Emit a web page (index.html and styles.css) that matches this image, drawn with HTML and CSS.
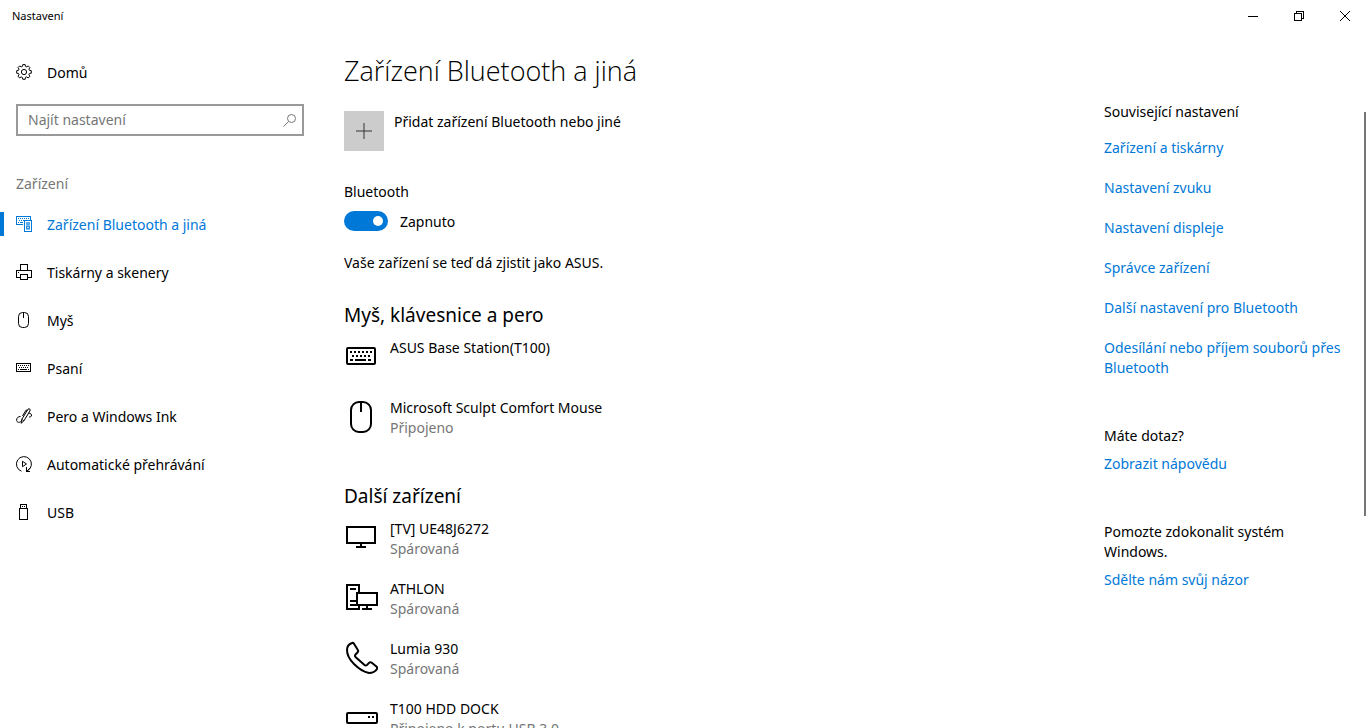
FILE: index.html
```
<!DOCTYPE html>
<html lang="cs">
<head>
  <meta charset="UTF-8">
  <meta name="viewport" content="width=device-width, initial-scale=1">
  <title>Nastavení</title>
  <link rel="stylesheet" href="styles.css">
</head>
<body>

<header class="titlebar">
  <span class="titlebar-name">Nastavení</span>
  <div class="window-buttons">
    <button type="button" aria-label="Minimalizovat">
      <svg width="10" height="10" viewBox="0 0 10 10"><path class="crisp" d="M0 5.5h10"/></svg>
    </button>
    <button type="button" aria-label="Obnovit">
      <svg width="10" height="10" viewBox="0 0 10 10"><path class="crisp" d="M.5 2.5h7v7h-7zM2.5 2.5v-2h7v7h-2"/></svg>
    </button>
    <button type="button" aria-label="Zavřít">
      <svg width="10" height="10" viewBox="0 0 10 10"><path d="M0 0l10 10M10 0L0 10"/></svg>
    </button>
  </div>
</header>

<div class="layout">
  <nav class="sidebar">
    <a class="nav-link" href="#domu">
      <svg width="16" height="16" viewBox="0 0 16 16"><path d="M6.8.6h2.4l.3 1.8 1.2.5 1.5-1 1.7 1.7-1 1.5.5 1.2 1.9.4v2.5l-1.9.3-.5 1.2 1 1.5-1.7 1.8-1.5-1.1-1.2.5-.3 1.9H6.8l-.4-1.9-1.2-.5-1.5 1.1L2 12.2l1-1.5-.5-1.2-1.8-.3V6.7l1.8-.4.5-1.2-1-1.5 1.7-1.7 1.5 1 1.2-.5z"/><circle cx="8" cy="8" r="2.6"/></svg>
      <span>Domů</span>
    </a>
    <div class="search">
      <input type="text" placeholder="Najít nastavení" aria-label="Najít nastavení">
      <svg width="13" height="13" viewBox="0 0 13 13"><circle cx="8.500" cy="4.500" r="4"/><path d="M5.500 7.500L.4 12.600"/></svg>
    </div>
    <h2 class="sidebar-title">Zařízení</h2>
    <ul class="nav-list">
      <li><a class="nav-link active" href="#bluetooth">
        <svg width="16" height="16" viewBox="0 0 16 16"><g class="crisp"><path d="M7 8.500H.5v-8h14v3"/><path stroke-dasharray="1 1" d="M2 2.500h11M3 4.500h5"/><path d="M2 6.500h1M4 6.500h3M8.500 4.500h7v11h-7z"/></g><circle cx="12" cy="7.500" r="1"/><circle cx="12" cy="11.500" r="1.500"/><path stroke-opacity=".5" d="M10.500 6v8M13.500 6v8M12 9v5"/></svg>
        <span>Zařízení Bluetooth a jiná</span>
      </a></li>
      <li><a class="nav-link" href="#tiskarny">
        <svg width="16" height="16" viewBox="0 0 16 16"><path class="crisp" d="M4.500 6V.500h7V6M4.500 13.500h-4v-7h15v7h-4M4.500 10.500h7v5h-7zM2 8.500h1"/></svg>
        <span>Tiskárny a skenery</span>
      </a></li>
      <li><a class="nav-link" href="#mys">
        <svg width="16" height="16" viewBox="0 0 16 16"><rect x="2.500" y=".5" width="10" height="15" rx="4"/><path class="crisp" d="M7.500 0v6"/></svg>
        <span>Myš</span>
      </a></li>
      <li><a class="nav-link" href="#psani">
        <svg width="16" height="16" viewBox="0 0 16 16"><g class="crisp"><path d="M.5 3.500h14v8H.5z"/><path stroke-dasharray="1 1" d="M2 5.500h11M3 7.500h10"/><path d="M2 9.500h1M4 9.500h7M12 9.500h1"/></g></svg>
        <span>Psaní</span>
      </a></li>
      <li><a class="nav-link" href="#pero">
        <svg width="16" height="16" viewBox="0 0 16 16"><path d="M5 15.300l.8-4L12 1.200q1-1 1.800-.2t.1 2L7.800 13zM5.800 11.300l2 1.500M6.500 8l3.500-5.800 1.500-.2M4.600 8.500C2 8.300.5 10.300.6 12.300c.1 2 2.500 2.800 4 1.200M12.600 5c2 .1 3.500 1.500 2.800 3-.6 1.200-1.800 1.200-2.400.6"/></svg>
        <span>Pero a Windows Ink</span>
      </a></li>
      <li><a class="nav-link" href="#prehravani">
        <svg width="16" height="16" viewBox="0 0 16 16"><path d="M5.500 15.200A7.500 7.500 0 1 1 11.500 14.700M6.500 5.300v5.400l4-2.700z"/><path class="crisp" d="M10.500 11v4.500H14"/><path d="M10.500 15.500l3.500-3.500"/></svg>
        <span>Automatické přehrávání</span>
      </a></li>
      <li><a class="nav-link" href="#usb">
        <svg width="16" height="16" viewBox="0 0 16 16"><path class="crisp" d="M3.500 4.500h8v11h-8zM4.500 4.500v-4h6v4M6 2.500h1M8 2.500h1"/></svg>
        <span>USB</span>
      </a></li>
    </ul>
  </nav>

  <main class="content">
    <h1>Zařízení Bluetooth a jiná</h1>

    <button class="add-device" type="button">
      <span class="add-icon">
        <svg width="16" height="16" viewBox="0 0 16 16"><path d="M8 0v16M0 8h16"/></svg>
      </span>
      Přidat zařízení Bluetooth nebo jiné
    </button>

    <label class="field-label" for="bluetooth">Bluetooth</label>
    <div class="toggle-row">
      <input type="checkbox" role="switch" id="bluetooth" checked>
      <label for="bluetooth">Zapnuto</label>
    </div>
    <p class="status">Vaše zařízení se teď dá zjistit jako ASUS.</p>

    <h2>Myš, klávesnice a pero</h2>
    <ul class="devices">
      <li><button type="button">
        <svg width="34" height="36" viewBox="0 0 34 36"><rect x="3" y="10" width="28" height="16" rx="1"/><g class="crisp"><path stroke-dasharray="2 2" d="M6 14h22M8 18h18"/><path d="M6 22h3M11 22h11M24 22h3"/></g></svg>
        <span class="device-text">ASUS Base Station(T100)</span>
      </button></li>
      <li><button type="button">
        <svg width="34" height="36" viewBox="0 0 34 36"><rect x="7" y="4" width="20" height="30" rx="8"/><path class="crisp" d="M17 3v11"/></svg>
        <span class="device-text">Microsoft Sculpt Comfort Mouse<small>Připojeno</small></span>
      </button></li>
    </ul>

    <h2>Další zařízení</h2>
    <ul class="devices">
      <li><button type="button">
        <svg width="34" height="36" viewBox="0 0 34 36"><path class="crisp" d="M3 8h28v16H3zM17 24v4M12 28h10"/></svg>
        <span class="device-text">[TV] UE48J6272<small>Spárovaná</small></span>
      </button></li>
      <li><button type="button">
        <svg width="34" height="36" viewBox="0 0 34 36"><path class="crisp" d="M15 14V6H3v24h12V26M6 10h6M6 22h7M6 26h7M13 14h20v12H13zM23 26v4M18 30h10"/></svg>
        <span class="device-text">ATHLON<small>Spárovaná</small></span>
      </button></li>
      <li><button type="button">
        <svg width="34" height="36" viewBox="0 0 34 36"><path d="M8 4c-3 1-5 4-5 7 0 4 2 9 7 14s10 8 15 9c3 0 6-1 8-4 .4-1 0-2-.6-2.500l-4.600-3.700c-1-.8-2-.7-2.800.1L23 26c-1 .8-1.500.8-2.500 0L11.500 18c-.8-1-.8-1.500 0-2.500l2-2c.8-.8.900-1.800.2-2.700L10 4.800C9.500 4 8.800 3.700 8 4z"/></svg>
        <span class="device-text">Lumia 930<small>Spárovaná</small></span>
      </button></li>
      <li><button type="button">
        <svg width="34" height="36" viewBox="0 0 34 36"><rect x="3" y="14" width="30" height="10" rx="1"/><path class="crisp" d="M24 18h2M28 18h2"/></svg>
        <span class="device-text">T100 HDD DOCK<small>Připojeno k portu USB 3.0</small></span>
      </button></li>
    </ul>
  </main>

  <aside class="related">
    <section>
      <h3>Související nastavení</h3>
      <ul class="related-links">
        <li><a href="#zarizeni">Zařízení a tiskárny</a></li>
        <li><a href="#zvuk">Nastavení zvuku</a></li>
        <li><a href="#displej">Nastavení displeje</a></li>
        <li><a href="#spravce">Správce zařízení</a></li>
        <li><a href="#dalsi">Další nastavení pro Bluetooth</a></li>
        <li><a href="#soubory">Odesílání nebo příjem souborů přes Bluetooth</a></li>
      </ul>
    </section>
    <section>
      <h3>Máte dotaz?</h3>
      <a href="#napoveda">Zobrazit nápovědu</a>
    </section>
    <section>
      <h3>Pomozte zdokonalit systém Windows.</h3>
      <a href="#nazor">Sdělte nám svůj názor</a>
    </section>
  </aside>
</div>

<div class="scroll-thumb"></div>

</body>
</html>
```
FILE: styles.css
```
* {
  box-sizing: border-box;
}
body {
  margin: 0;
  height: 100vh;
  display: flex;
  flex-direction: column;
  overflow: hidden;
  background: #fff;
  color: #000;
  font-family: "Noto Sans", "Open Sans", sans-serif;
  font-size: 14px;
  line-height: 20px;
}
h1, h2, h3, p, ul {
  margin: 0;
  padding: 0;
  font-weight: 400;
}
ul {
  list-style: none;
}
button, input {
  font: inherit;
  color: inherit;
}
button {
  padding: 0;
  border: 0;
  background: none;
  text-align: left;
}
a {
  color: #0078d7;
  text-decoration: none;
}
svg {
  flex: none;
  fill: none;
  stroke: currentColor;
}
.crisp {
  shape-rendering: crispEdges;
}

/* title bar */
.titlebar {
  flex: none;
  height: 32px;
  display: flex;
  align-items: center;
  justify-content: space-between;
  padding-left: 12px;
  font-size: 11px;
}
.window-buttons {
  display: flex;
}
.window-buttons button {
  width: 46px;
  height: 32px;
  display: flex;
  align-items: center;
  justify-content: center;
}

.layout {
  flex: 1;
  min-height: 0;
  display: flex;
}

/* left menu */
.sidebar {
  flex: none;
  width: 320px;
  padding-top: 16px;
}
.nav-link {
  height: 48px;
  display: flex;
  align-items: center;
  gap: 15px;
  padding-left: 16px;
  color: #000;
}
.nav-link span {
  padding-top: 2px;
}
.nav-link.active {
  color: #0078d7;
}
.nav-link.active::before {
  content: "";
  width: 4px;
  height: 24px;
  margin: 0 -3px 0 -16px;
  background: #0078d7;
}
.search {
  height: 32px;
  margin: 8px 16px 0;
  padding: 0 6px 0 10px;
  display: flex;
  align-items: center;
  border: 2px solid #999;
  color: #767676;
}
.search input {
  flex: 1;
  min-width: 0;
  padding: 0;
  border: 0;
  outline: 0;
  background: none;
  color: #000;
}
.search input::placeholder {
  color: #767676;
  opacity: 1;
}
.sidebar-title {
  padding: 38px 16px 6px;
  font-size: 14px;
  color: #767676;
}

/* main column */
.content {
  flex: 1;
  min-width: 0;
  padding: 20px 24px 0;
}
.content h1 {
  margin-bottom: 21px;
  font-family: "Open Sans", "Noto Sans", sans-serif;
  font-size: 27px;
  font-weight: 300;
  line-height: 38px;
}
.content h2 {
  margin-bottom: 9px;
  font-size: 19px;
  line-height: 28px;
}
.add-device {
  display: flex;
  align-items: flex-start;
  gap: 10px;
  margin-bottom: 31px;
  line-height: 22px;
}
.add-icon {
  width: 40px;
  height: 40px;
  display: flex;
  align-items: center;
  justify-content: center;
  background: #ccc;
  color: #333;
}
.field-label {
  display: block;
  margin-bottom: 8px;
}
.toggle-row {
  display: flex;
  align-items: center;
  gap: 12px;
}
.toggle-row label {
  padding-top: 2px;
}
.toggle-row input {
  appearance: none;
  width: 44px;
  height: 20px;
  margin: 0;
  padding: 5px;
  display: flex;
  border-radius: 10px;
  background: #999;
}
.toggle-row input::before {
  content: "";
  width: 10px;
  height: 10px;
  border-radius: 50%;
  background: #fff;
}
.toggle-row input:checked {
  justify-content: flex-end;
  background: #0078d7;
}
.status {
  margin: 21px 0 28px;
}
.devices {
  margin-bottom: 24px;
}
.devices li {
  height: 60px;
}
.devices button {
  display: flex;
  align-items: flex-start;
  gap: 12px;
}
.devices svg {
  stroke-width: 2;
}
.device-text small {
  display: block;
  font-size: 14px;
  color: #767676;
}

/* right column */
.related {
  flex: none;
  width: 264px;
  padding: 70px 20px 0 0;
}
.related section {
  margin-bottom: 48px;
}
.related h3 {
  margin-bottom: 8px;
  font-size: 14px;
}
.related a {
  display: block;
}
.related-links {
  display: grid;
  gap: 20px;
  padding-top: 8px;
}

.scroll-thumb {
  position: fixed;
  top: 112px;
  right: 2px;
  width: 2px;
  height: 404px;
  background: #767676;
}
```
